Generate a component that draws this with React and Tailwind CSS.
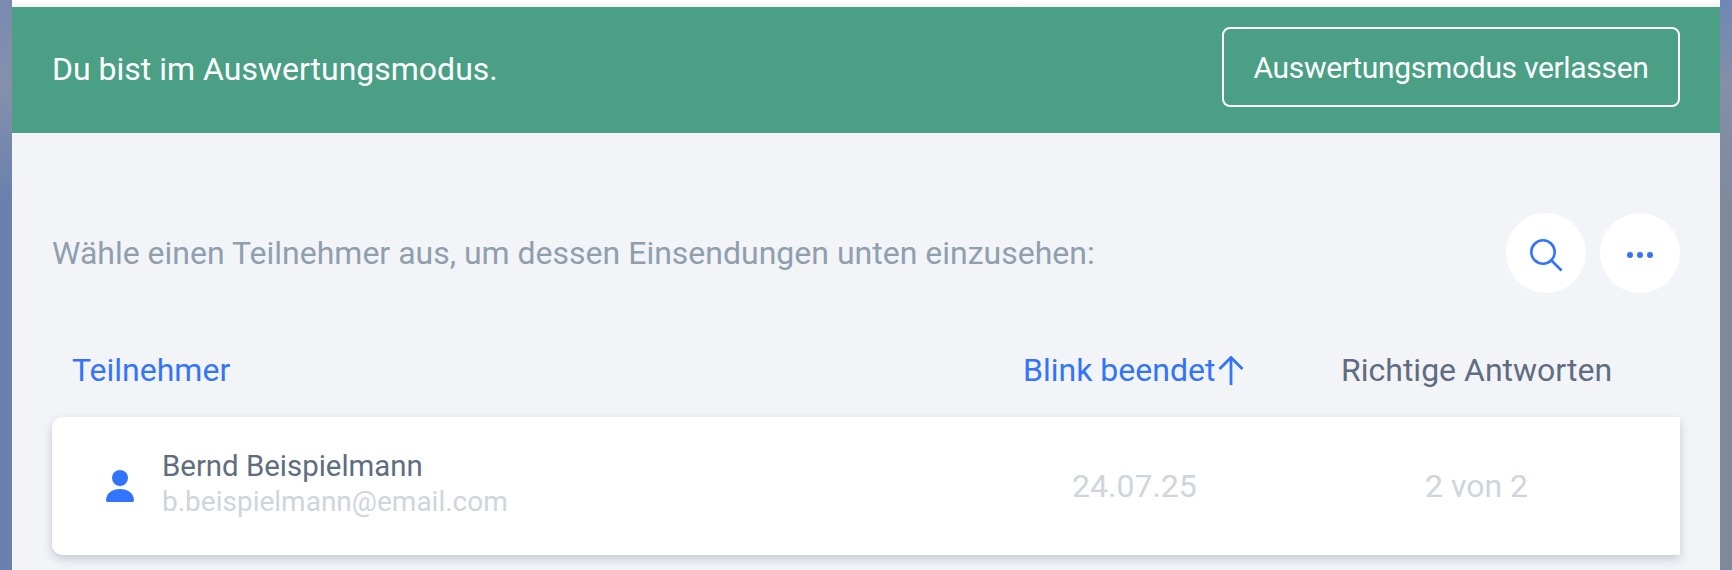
import React from "react";

const UserIcon = () => (
  <svg width="28" height="32" viewBox="0 0 28 32" className="fill-[#3374ff]">
    <circle cx="14" cy="8" r="8" />
    <path d="M0 30 C0.5 23 6 19 14 19 C22 19 27.5 23 28 30 C28 31.5 27.5 32 26 32 L2 32 C0.5 32 0 31.5 0 30 Z" />
  </svg>
);

const SearchIcon = () => (
  <svg width="33" height="33" viewBox="0 0 33 33" fill="none" stroke="#3374ff" strokeWidth="2.6" className="mt-[4px]">
    <circle cx="13" cy="13" r="11.7" />
    <line x1="21.5" y1="21.5" x2="31.5" y2="31.5" />
  </svg>
);

const Dots = () => (
  <svg width="26" height="6" viewBox="0 0 26 6" className="mt-[4px] fill-[#3374ff]">
    <circle cx="3" cy="3" r="3" />
    <circle cx="13" cy="3" r="3" />
    <circle cx="23" cy="3" r="3" />
  </svg>
);

const SortArrow = () => (
  <svg width="26" height="30" viewBox="0 0 26 30" fill="none" stroke="#3374ff" strokeWidth="2.8" className="ml-[3px]">
    <path d="M13 1.5 L13 29" />
    <path d="M1.5 13 L13 1.5 L24.5 13" />
  </svg>
);

export default function App() {
  return (
    <div className="flex h-[570px] overflow-hidden font-['Roboto',sans-serif]">
      <div className="w-[12px] bg-gradient-to-b from-[#7a8ab0] via-[#8690ad] via-15% to-[#6a80ad] to-35%" />
      <div className="flex-1 bg-[#f2f4f8]">
        <div className="h-[7px] bg-gradient-to-b from-white to-[#f2f2f2]" />
        <div className="flex h-[126px] items-center justify-between bg-[#4a9f85] px-[40px] text-white">
          <span className="mb-[2px] text-[32px] font-[380]">Du bist im Auswertungsmodus.</span>
          <button className="mb-[6px] h-[80px] w-[458px] rounded-[8px] border-2 border-white text-[30px] font-[380] tracking-[-0.32px]">
            Auswertungsmodus verlassen
          </button>
        </div>

        <div className="flex items-center justify-between px-[40px] pt-[80px]">
          <span className="text-[32px] font-normal text-[#8f9fae]">
            Wähle einen Teilnehmer aus, um dessen Einsendungen unten einzusehen:
          </span>
          <div className="flex gap-[14px]">
            <div className="flex size-[80px] items-center justify-center rounded-full bg-white">
              <SearchIcon />
            </div>
            <div className="flex size-[80px] items-center justify-center rounded-full bg-white">
              <Dots />
            </div>
          </div>
        </div>

        <div className="mx-[40px] mt-[55px] flex items-center text-[32px] font-[380] leading-[45px]">
          <span className="w-[971px] pl-[20px] text-[#3374ff]">Teilnehmer</span>
          <span className="flex w-[318px] items-center text-[#3374ff]">
            Blink beendet
            <SortArrow />
          </span>
          <span className="text-[#606c80]">Richtige Antworten</span>
        </div>

        <div className="mx-[40px] mt-[24px] flex h-[138px] items-center rounded-l-[10px] bg-white shadow-[0_4px_10px_rgba(96,108,128,0.3)]">
          <div className="flex w-[971px] items-center pl-[54px]">
            <UserIcon />
            <div className="mb-[4px] ml-[28px]">
              <div className="text-[29.4px] font-[380] leading-[35px] text-[#606c80]">Bernd Beispielmann</div>
              <div className="text-[28px] font-normal leading-[35px] text-[#ced5db]">b.beispielmann@email.com</div>
            </div>
          </div>
          <span className="w-[318px] pl-[49px] text-[32px] font-normal text-[#ced5db]">24.07.25</span>
          <span className="pl-[84px] text-[32px] font-normal text-[#ced5db]">2 von 2</span>
        </div>
      </div>
      <div className="w-[12px] bg-gradient-to-b from-[#6f87b5] via-[#858fa8] via-15% to-[#7e8a9c] to-35%" />
    </div>
  );
}
